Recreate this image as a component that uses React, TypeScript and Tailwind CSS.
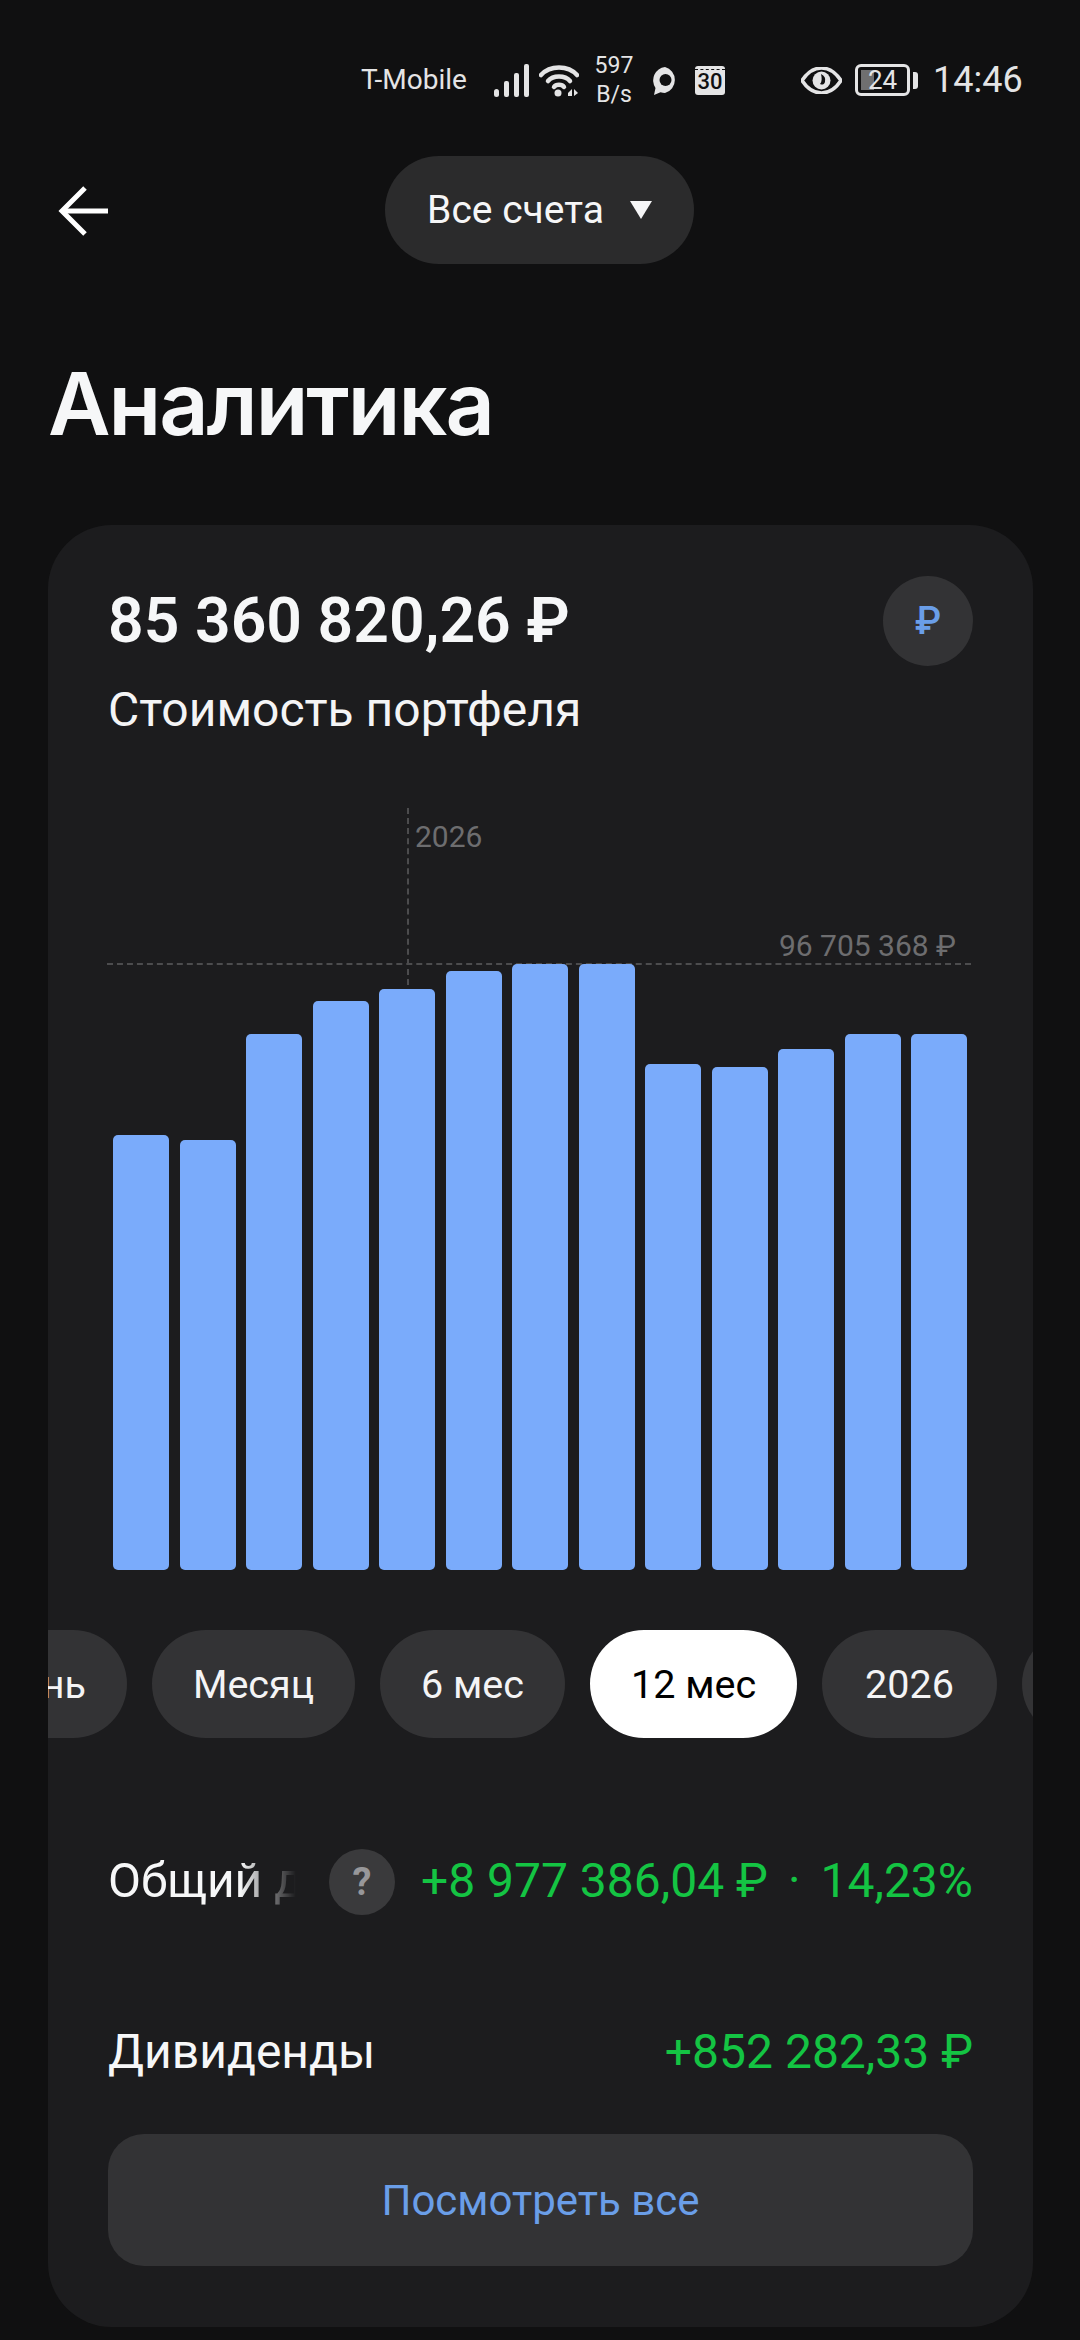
const FONT = "font-['Roboto','Noto_Sans',sans-serif]";
const barHeights = [435, 430, 536, 569, 581, 599, 606, 606, 506, 503, 521, 536, 536];

function StatusBar() {
  return (
    <div className="flex h-[60px] items-center pl-[361px] text-[#e4e4e5]">
      <span className="w-[108px] whitespace-nowrap text-[28px] leading-none">T-Mobile</span>
      <svg className="ml-[25px]" width="35" height="33" viewBox="0 0 35 33" fill="currentColor">
        <rect x="0" y="25" width="5" height="8" rx="2.5" />
        <rect x="10" y="17" width="5" height="16" rx="2" />
        <rect x="20" y="9" width="5" height="24" rx="2" />
        <rect x="30" y="0" width="5" height="33" rx="2" />
      </svg>
      <svg className="ml-[10px]" width="40" height="33" viewBox="0 0 40 33" fill="none" stroke="currentColor" strokeWidth="4.5" strokeLinecap="round">
        <path d="M2 11 C11 1 29 1 38 11" />
        <path d="M9 17 C14 11 26 11 31 17" />
        <path d="M15 23 C17 20 23 20 25 23" />
        <circle cx="19" cy="29" r="3.5" fill="currentColor" stroke="none" />
        <path d="M29 29 L33 25 V32 H29 Z M35 25 L39 29 L35 32 Z" fill="currentColor" stroke="none" />
      </svg>
      <div className="ml-[15px] flex w-[40px] flex-col items-center text-[23px] leading-[29px]">
        <span>597</span>
        <span>B/s</span>
      </div>
      <svg className="ml-[17px] mt-[2px]" width="28" height="30" viewBox="0 0 28 30" fill="none">
        <path d="M14 1a13.500 13.500 0 0 1 0 26c-1.500 0-3-.3-4.500-.8L3 29l1.500-7A13.500 13.500 0 0 1 14 1Z" fill="currentColor" />
        <circle cx="14.500" cy="14" r="6" fill="#101011" />
      </svg>
      <div className="relative ml-[16px] flex h-[29px] w-[30px] items-center justify-center rounded-[3px] bg-[#e4e4e5] pt-[4px] text-[22px] font-medium leading-none text-[#101011]">
        <div className="absolute left-0 right-0 top-[3px] border-t border-dashed border-[#101011]" />
        30
      </div>
      <svg className="ml-[76px]" width="41" height="27" viewBox="0 0 41 27">
        <path d="M1 13.500C7 4.500 13 1 20.500 1S34 4.500 40 13.500C34 22.500 28 26 20.500 26S7 22.500 1 13.500Z" fill="none" stroke="currentColor" strokeWidth="3.500" />
        <circle cx="20.500" cy="13.500" r="9" fill="currentColor" />
        <path d="M20 7a7 7 0 0 1 4 8c-1 3-3 3-5 2 2-2 2-6 1-10Z" fill="#101011" />
      </svg>
      <div className="relative ml-[13px] flex h-[32px] w-[55px] items-center justify-center overflow-hidden rounded-[6px] border-[3px] border-[#e4e4e5] text-[26px] leading-none">
        <div className="absolute bottom-[3px] left-[3px] top-[3px] w-[13px] bg-[#6f6f70]" />
        <span className="relative">24</span>
      </div>
      <div className="ml-[3px] h-[17px] w-[5px] rounded-r-[3px] bg-[#e4e4e5]" />
      <span className="ml-[15px] text-[36px] leading-none">14:46</span>
    </div>
  );
}

function Pill({ label, active, className = "" }: { label: string; active?: boolean; className?: string }) {
  return (
    <div className={`flex h-[108px] shrink-0 items-center justify-center overflow-hidden rounded-[54px] pt-[2px] text-[39.500px] ${active ? "bg-white text-black" : "bg-[#333335] text-[#f4f4f5]"} ${className}`}>
      {label}
    </div>
  );
}

export default function App() {
  return (
    <div className={`h-[2340px] w-[1080px] overflow-hidden bg-[#101011] pt-[50px] text-white ${FONT}`}>
      <StatusBar />
      <header className="relative mt-[46px] flex h-[108px] items-center justify-center">
        <svg className="absolute left-[58px] top-[30px]" width="52" height="50" viewBox="0 0 52 50" fill="none" stroke="white" strokeWidth="5">
          <path d="M50 25H4" />
          <path d="M27 2 L4 25 L27 48" />
        </svg>
        <div className="ml-[-1px] flex h-[108px] w-[309px] items-center justify-center gap-[26px] rounded-[54px] bg-[#2b2b2c] text-[39px] text-[#f6f6f7]">
          <span>Все счета</span>
          <svg width="22" height="20" viewBox="0 0 22 20" fill="#f6f6f7"><path d="M0 1h22L11 19Z" /></svg>
        </div>
      </header>
      <h1 className="ml-[48px] mt-[90px] font-['Inter',sans-serif] text-[86px] font-semibold leading-[100px] tracking-[-2px] text-[#f6f7f8]">Аналитика</h1>
      <section className="ml-[48px] mt-[71px] h-[1802px] w-[985px] overflow-hidden rounded-[64px] bg-[#1c1c1e]">
        <div className="flex items-start justify-between px-[60px] pt-[51px]">
          <div>
            <div className="mt-[12px] text-[62.500px] font-semibold leading-[66px] text-[#f6f7f8]">85 360 820,26 ₽</div>
            <div className="mt-[28px] text-[48px] leading-[56px] text-[#f4f4f5]">Стоимость портфеля</div>
          </div>
          <div className="flex h-[90px] w-[90px] items-center justify-center rounded-full bg-[#333335] text-[38px] font-medium text-[#6a9ee8]">₽</div>
        </div>
        <div className="relative ml-[59px] mr-[62px] mt-[70px] flex h-[762px] items-end gap-[10.500px] pl-[6px]">
          <div className="absolute left-[300px] top-0 h-[177px] border-l-2 border-dashed border-[#4c4c4e]" />
          <div className="absolute left-0 right-0 top-[155px] border-t-2 border-dashed border-[#4c4c4e]" />
          <div className="absolute left-[308px] top-[11px] text-[30px] leading-[36px] text-[#6d6d6f]">2026</div>
          <div className="absolute right-[15px] top-[120px] text-[30px] leading-[36px] text-[#6d6d6f]">96 705 368 ₽</div>
          {barHeights.map((h, i) => (
            <div key={i} className="relative w-[56px] rounded-[5px] bg-[#7aabfb]" style={{ height: h }} />
          ))}
        </div>
        <div className="mt-[60px] flex gap-[25px]">
          <div className="flex h-[108px] w-[79px] shrink-0 items-center justify-end overflow-hidden rounded-r-[54px] bg-[#333335] pr-[41px] pt-[2px] text-[39.500px] text-[#f4f4f5]">нь</div>
          <Pill label="Месяц" className="w-[203px]" />
          <Pill label="6 мес" className="w-[185px]" />
          <Pill label="12 мес" active className="w-[207px]" />
          <Pill label="2026" className="w-[175px]" />
          <div className="h-[108px] w-[60px] shrink-0 rounded-l-[54px] bg-[#333335]" />
        </div>
        <div className="mt-[111px] flex h-[66px] items-center px-[60px]">
          <span className="mb-[3px] w-[221px] overflow-hidden whitespace-nowrap text-[48px] text-[#f6f7f8] [mask-image:linear-gradient(90deg,#000_60%,transparent_85%)]">Общий доход</span>
          <div className="flex h-[66px] w-[66px] shrink-0 items-center justify-center rounded-full bg-[#3a3a3c] text-[38px] font-bold text-[#97979a]">?</div>
          <span className="mb-[3px] ml-auto flex gap-[20px] whitespace-nowrap text-[48px] text-[#14c443]">
            <span>+8 977 386,04 ₽</span>
            <span>·</span>
            <span>14,23%</span>
          </span>
        </div>
        <div className="mt-[104px] flex h-[66px] items-center justify-between px-[60px] text-[48px]">
          <span className="text-[#f6f7f8]">Дивиденды</span>
          <span className="text-[#14c443]">+852 282,33 ₽</span>
        </div>
        <div className="mx-[60px] mt-[49px] flex h-[132px] items-center justify-center rounded-[36px] bg-[#333335] text-[42px] text-[#6a9ee8]">
          Посмотреть все
        </div>
      </section>
    </div>
  );
}
